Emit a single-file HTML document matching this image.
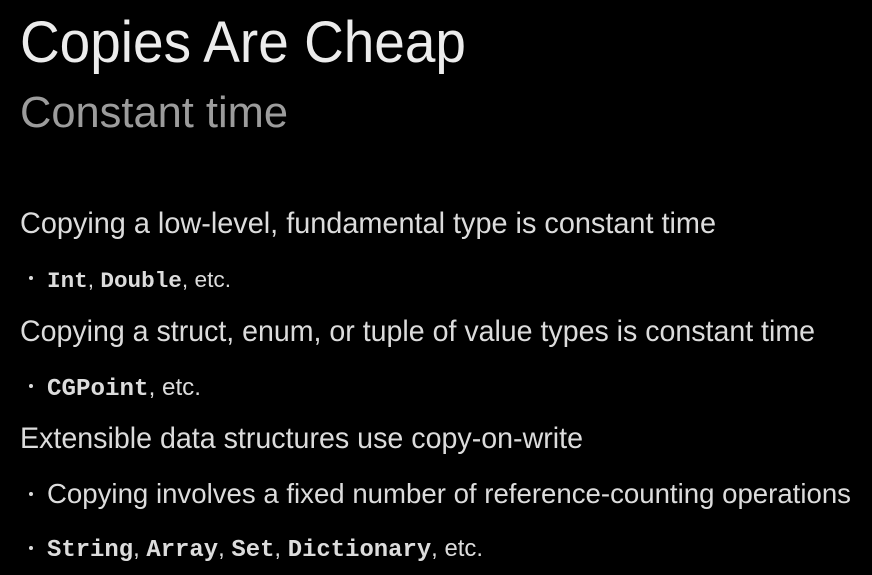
<!DOCTYPE html>
<html><head><meta charset="utf-8"><style>
html,body{margin:0;padding:0;background:#000;width:872px;height:575px;overflow:hidden}
svg{display:block}
text{font-family:"Liberation Sans",sans-serif}
.m{font-family:"Liberation Mono",monospace;font-weight:bold}
</style></head><body>
<svg width="872" height="575" viewBox="0 0 872 575">
<rect width="872" height="575" fill="#000"/>
<text x="20" y="62" font-size="58" fill="#ececec" textLength="446" lengthAdjust="spacingAndGlyphs">Copies Are Cheap</text>
<text x="20" y="127" font-size="44" fill="#9c9c9c" textLength="268" lengthAdjust="spacingAndGlyphs">Constant time</text>
<text x="20" y="233" font-size="30" fill="#dcdcdc" textLength="696" lengthAdjust="spacingAndGlyphs">Copying a low-level, fundamental type is constant time</text>
<circle cx="31" cy="278" r="2" fill="#dcdcdc"/>
<text x="47" y="287" font-size="22" fill="#dcdcdc" textLength="184" lengthAdjust="spacingAndGlyphs"><tspan class="m">Int</tspan>, <tspan class="m">Double</tspan>, etc.</text>
<text x="20" y="341" font-size="30" fill="#dcdcdc" textLength="795" lengthAdjust="spacingAndGlyphs">Copying a struct, enum, or tuple of value types is constant time</text>
<circle cx="31" cy="386" r="2" fill="#dcdcdc"/>
<text x="47" y="395" font-size="24" fill="#dcdcdc" textLength="154" lengthAdjust="spacingAndGlyphs"><tspan class="m">CGPoint</tspan>, etc.</text>
<text x="20" y="448" font-size="30" fill="#dcdcdc" textLength="563" lengthAdjust="spacingAndGlyphs">Extensible data structures use copy-on-write</text>
<circle cx="31" cy="494" r="2" fill="#dcdcdc"/>
<text x="47" y="503" font-size="28" fill="#dcdcdc" textLength="804" lengthAdjust="spacingAndGlyphs">Copying involves a fixed number of reference-counting operations</text>
<circle cx="31" cy="548" r="2" fill="#dcdcdc"/>
<text x="47" y="556" font-size="24" fill="#dcdcdc" textLength="436" lengthAdjust="spacingAndGlyphs"><tspan class="m">String</tspan>, <tspan class="m">Array</tspan>, <tspan class="m">Set</tspan>, <tspan class="m">Dictionary</tspan>, etc.</text>
</svg>
</body></html>
